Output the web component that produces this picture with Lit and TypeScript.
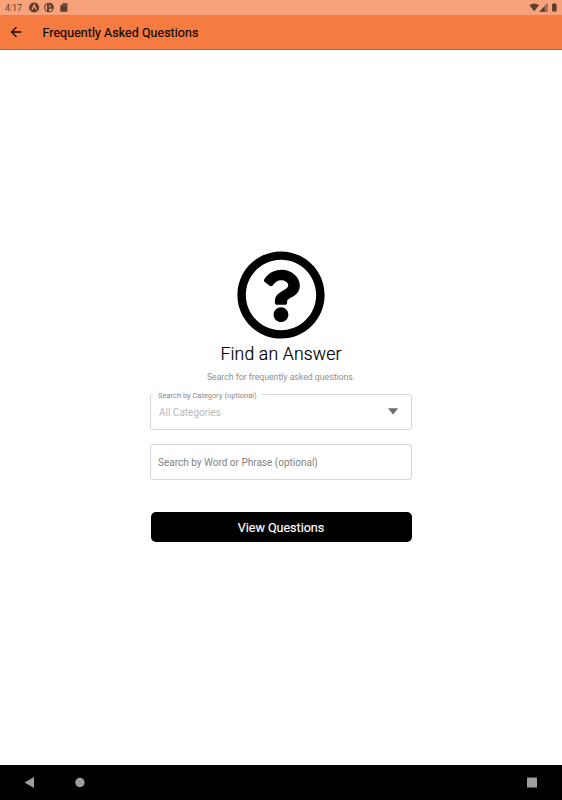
import { LitElement, html, css, svg } from "lit";
import { customElement } from "lit/decorators.js";

@customElement("status-bar")
class StatusBar extends LitElement {
  static styles = css`
    :host { display: flex; align-items: center; height: 15px; background: #f7a27a; color: #5d3d2e; box-sizing: border-box; padding: 0 4px 0 5px; }
    .time { font-size: 9px; line-height: 15px; width: 24px; letter-spacing: -0.1px; padding-top: 1px; }
    svg { display: block; }
    .gap { flex: 1; }
  `;
  render() {
    return html`
      <span class="time">4:17</span>
      <svg width="40" height="15" viewBox="0 0 40 15">
        <circle cx="5.1" cy="7.5" r="5.1" fill="#5d3d2e" />
        <path d="M2.9 9.6Q4.3 7.2 5.1 5Q5.9 7.2 7.3 9.6" fill="none" stroke="#f7a27a" stroke-width="1.2" />
        <circle cx="20" cy="7.5" r="4.3" fill="none" stroke="#5d3d2e" stroke-width="1.1" />
        <path d="M18 4h2v8h-2zM20 3.5h2.5l1.5 2v3.2h-4V7.2h1.6V5.6H20z" fill="#5d3d2e" />
        <path d="M34 3.2h4.4v8.6h-7.1V5.8z" fill="#5d3d2e" />
        <path d="M33.6 4.5v1.7M35.1 4.5v1.7M36.6 4.5v1.7" stroke="#a66c52" stroke-width=".6" />
      </svg>
      <span class="gap"></span>
      <svg width="29" height="15" viewBox="0 0 29 15">
        <path d="M.4 5.2Q5.2 1.8 10 5.2L5.2 11.3z" fill="#5d3d2e" />
        <path d="M18.5 3.5v8h-8z" fill="#c07f61" />
        <path d="M15.8 6.2v5.3h-5.3z" fill="#5d3d2e" />
        <path d="M18 4v7.4h-7.2z" fill="none" stroke="#5d3d2e" stroke-width=".6" />
        <path d="M23.1 4h1.3v-.7h2V4h1.2v7.5h-4.5z" fill="#5d3d2e" />
      </svg>
    `;
  }
}

@customElement("app-header")
class AppHeader extends LitElement {
  static styles = css`
    :host { display: flex; align-items: center; height: 35px; box-sizing: border-box; background: #f67b40; border-bottom: 1px solid #dd5c1e; padding-left: 8px; }
    svg { display: block; margin-right: 18.5px; }
    .title { font-size: 12.4px; font-weight: 400; -webkit-text-stroke: 0.2px #0d0805; color: #0d0805; line-height: 16px; padding-top: 2px; letter-spacing: 0.09px; white-space: nowrap; }
  `;
  render() {
    return html`
      <svg width="16" height="16" viewBox="0 0 24 24"><path d="M20 11H7.83l5.59-5.59L12 4l-8 8 8 8 1.41-1.41L7.83 13H20v-2z" fill="#0d0805" /></svg>
      <span class="title">Frequently Asked Questions</span>
    `;
  }
}

@customElement("nav-bar")
class NavBar extends LitElement {
  static styles = css`
    :host { display: flex; align-items: center; justify-content: space-between; height: 35px; background: #000; padding: 0 24px; }
    svg { display: block; }
  `;
  render() {
    return html`
      <svg width="62" height="35" viewBox="0 0 62 35"><path d="M10 12v11L.5 17.5z" fill="#9e9e9e" /><circle cx="55.9" cy="17.5" r="4.7" fill="#9e9e9e" /></svg>
      <svg width="11" height="35" viewBox="0 0 11 35"><rect x="0" y="12.5" width="10" height="10" rx=".6" fill="#9e9e9e" /></svg>
    `;
  }
}

const questionMark = svg`<path d="M256 8C119.043 8 8 119.083 8 256c0 136.997 111.043 248 248 248s248-111.003 248-248C504 119.083 392.957 8 256 8zm0 448c-110.532 0-200-89.431-200-200 0-110.495 89.472-200 200-200 110.491 0 200 89.471 200 200 0 110.53-89.431 200-200 200zm107.244-255.2c0 67.052-72.421 68.084-72.421 92.863V300c0 6.627-5.373 12-12 12h-45.647c-6.627 0-12-5.373-12-12v-8.659c0-35.745 27.1-50.034 47.579-61.516 17.561-9.845 28.324-16.541 28.324-29.579 0-17.246-21.999-28.693-39.784-28.693-23.189 0-33.894 10.977-48.942 29.969-4.057 5.12-11.46 6.071-16.666 2.124l-27.824-21.098c-5.107-3.872-6.251-11.066-2.644-16.363C184.846 131.491 214.94 112 261.794 112c49.071 0 101.45 38.304 101.45 88.8zM298 368c0 23.159-18.841 42-42 42s-42-18.841-42-42 18.841-42 42-42 42 18.841 42 42z" />`;

@customElement("app-root")
class AppRoot extends LitElement {
  static styles = css`
    :host { display: flex; flex-direction: column; height: 800px; background: #fff; font-family: Roboto, "Liberation Sans", sans-serif; }
    main { flex: 1; display: flex; flex-direction: column; align-items: center; padding-top: 200px; box-sizing: border-box; }
    .mark { display: block; }
    h1 { margin: 2px 0 0; font-size: 17.6px; line-height: 24px; font-weight: 300; -webkit-text-stroke: 0.2px #000; color: #000; letter-spacing: 0.17px; white-space: nowrap; }
    .hint { margin: 5px 0 0; font-size: 8.7px; line-height: 12px; color: #8f8f8f; white-space: nowrap; }
    .field { position: relative; display: flex; align-items: center; justify-content: space-between; width: 262px; height: 36px; box-sizing: border-box; border: 1px solid #d6d6d6; border-radius: 3px; padding: 0 13px 0 8px; }
    .category { margin-top: 11px; }
    .phrase { margin-top: 14px; padding-left: 7px; }
    .label { position: absolute; left: 2px; top: -5px; padding: 0 5px; background: #fff; font-size: 7.5px; line-height: 12px; color: #8a8a8a; white-space: nowrap; }
    .value { font-size: 10px; line-height: 14px; padding-top: 1px; color: #bababa; white-space: nowrap; }
    .placeholder { font-size: 10px; line-height: 14px; padding-top: 1px; color: #828282; white-space: nowrap; }
    button { margin: 32px 0 0; width: 261px; height: 30px; padding: 1px 0 0; border: 0; border-radius: 5px; background: #000; color: #fff; font: 400 12.6px/29px Roboto, "Liberation Sans", sans-serif; -webkit-text-stroke: 0.15px #fff; letter-spacing: -0.04px; }
  `;
  render() {
    return html`
      <status-bar></status-bar>
      <app-header></app-header>
      <main>
        <svg class="mark" width="90" height="90" viewBox="0 0 512 512">${questionMark}</svg>
        <h1>Find an Answer</h1>
        <p class="hint">Search for frequently asked questions.</p>
        <div class="field category">
          <span class="label">Search by Category (optional)</span>
          <span class="value">All Categories</span>
          <svg width="10" height="8" viewBox="0 0 10 8"><path d="M.5 .5h9.2L5.1 6.3z" fill="#6c6c6c" stroke="#6c6c6c" stroke-width=".5" stroke-linejoin="round" /></svg>
        </div>
        <div class="field phrase"><span class="placeholder">Search by Word or Phrase (optional)</span></div>
        <button>View Questions</button>
      </main>
      <nav-bar></nav-bar>
    `;
  }
}
